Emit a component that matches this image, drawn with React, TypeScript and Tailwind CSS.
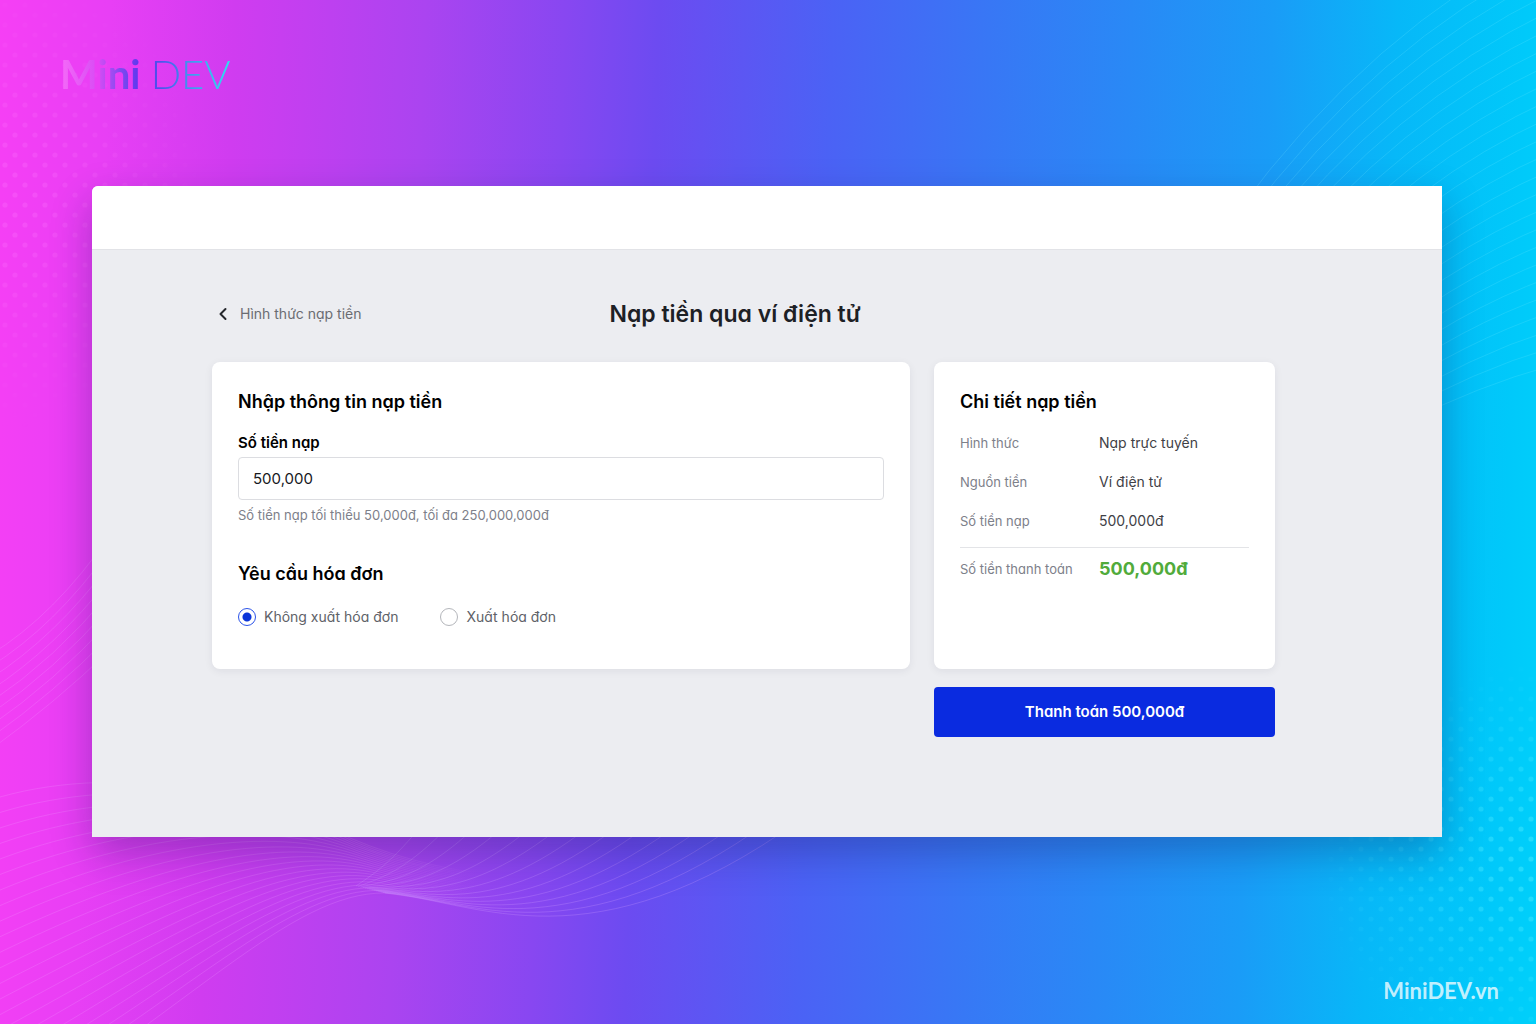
import { useState } from "react";
import type { ReactNode } from "react";

function Dots({ id, className, size, fill, mask }: { id: string; className: string; size: number; fill: string; mask: string }) {
  return (
    <svg aria-hidden="true" className={className} style={{ maskImage: mask }}>
      <defs>
        <pattern id={id} width={size} height={size} patternUnits="userSpaceOnUse">
          <circle cx={size / 4} cy={size / 4} r="2.6" fill={fill} />
          <circle cx={(size * 3) / 4} cy={(size * 3) / 4} r="2.6" fill={fill} />
        </pattern>
      </defs>
      <rect width="100%" height="100%" fill={`url(#${id})`} />
    </svg>
  );
}

function mix(a: number, b: number, t: number) {
  return a + (b - a) * t;
}

function steps(count: number) {
  return Array.from({ length: count }, (_, i) => i / (count - 1));
}

function Waves() {
  const left = steps(22).map(
    (t) => `M-10 ${mix(800, 1130, t)} C${mix(110, 190, t)} ${mix(762, 1010, t)} ${mix(260, 290, t)} ${mix(790, 892, t)} ${mix(350, 385, t)} ${mix(838, 893, t)} Q${mix(430, 440, t)} ${mix(872, 900, t)} ${mix(525, 500, t)} ${mix(878, 914, t)}`,
  );
  const rise = steps(14).map(
    (t) => `M${mix(356, 385, t)} ${mix(886, 893, t)} C${mix(370, 480, t)} ${mix(876, 902, t)} ${mix(390, 590, t)} ${mix(866, 970, t)} ${mix(430, 800, t)} ${mix(815, 820, t)}`,
  );
  const upper = steps(9).map((t) => `M-10 ${mix(655, 750, t)} Q55 ${mix(615, 703, t)} 110 ${mix(535, 650, t)}`);
  const right = steps(25).map(
    (t) => `M${mix(1235, 1400, t)} ${mix(215, 425, t)} Q${mix(1370, 1480, t)} ${mix(30, 385, t)} 1550 ${mix(-60, 366, t)}`,
  );
  return (
    <svg aria-hidden="true" viewBox="0 0 1536 1024" preserveAspectRatio="none" className="absolute inset-0 size-full" fill="none">
      <defs>
        <linearGradient id="left-fade" gradientUnits="userSpaceOnUse" x1="0" y1="0" x2="520" y2="0">
          <stop offset="0" stopColor="#f0a0ff" stopOpacity="0.22" />
          <stop offset="0.7" stopColor="#f0a0ff" stopOpacity="0.2" />
          <stop offset="0.92" stopColor="#f0a0ff" stopOpacity="0" />
        </linearGradient>
      </defs>
      <g stroke="url(#left-fade)">
        {left.map((d) => <path key={d} d={d} />)}
      </g>
      <g stroke="#d0a0ff" strokeOpacity="0.26">
        {rise.map((d) => <path key={d} d={d} />)}
      </g>
      <g stroke="#f0a0ff" strokeOpacity="0.22">
        {upper.map((d) => <path key={d} d={d} />)}
      </g>
      <g stroke="#7ff0ff" strokeOpacity="0.18">
        {right.map((d) => <path key={d} d={d} />)}
      </g>
    </svg>
  );
}

function Card({ title, children }: { title: string; children: ReactNode }) {
  return (
    <section className="rounded-lg bg-white px-[26px] pt-6 pb-10 shadow-[0_2px_8px_rgba(30,30,60,0.07)]">
      <h2 className="text-lg leading-8 font-semibold text-black">{title}</h2>
      {children}
    </section>
  );
}

function Choice({ label, checked, onChange }: { label: string; checked: boolean; onChange: () => void }) {
  return (
    <label className="flex items-center gap-2 text-sm leading-6 text-[#606268]">
      <input
        type="radio"
        name="invoice"
        checked={checked}
        onChange={onChange}
        className="size-[18px] appearance-none rounded-full border border-[#b4b6bb] bg-white checked:border-[#2a52e8] checked:bg-[radial-gradient(circle,#0c35d8_4px,transparent_5px)]"
      />
      {label}
    </label>
  );
}

const details = [
  ["Hình thức", "Nạp trực tuyến"],
  ["Nguồn tiền", "Ví điện tử"],
  ["Số tiền nạp", "500,000đ"],
];

export default function App() {
  const [amount, setAmount] = useState("500,000");
  const [invoice, setInvoice] = useState(false);
  return (
    <div className="relative isolate flex min-h-screen flex-col overflow-hidden bg-[linear-gradient(92deg,#f63ff5_0%,#e83ff5_7%,#d03cf0_15%,#ab44f0_27%,#8847f1_36%,#6c4bf1_42%,#4b62f5_53%,#3877f5_63%,#2989f6_72%,#1a9cf7_81%,#07b8f8_89%,#00c9fa_97%,#00d0fa_100%)] font-['Inter','Noto_Sans',sans-serif] [font-feature-settings:'cv11']">
      <div aria-hidden="true" className="absolute inset-0 -z-10">
        <Dots id="dots-left" className="absolute top-0 left-0 h-[440px] w-[220px]" size={20} fill="rgba(255,130,255,0.24)" mask="radial-gradient(ellipse at 0% 45%, black 10%, transparent 68%)" />
        <Dots id="dots-right" className="absolute right-0 bottom-0 h-[380px] w-[240px]" size={20} fill="rgba(110,250,255,0.32)" mask="radial-gradient(ellipse at 100% 58%, black 10%, transparent 66%)" />
        <Waves />
      </div>

      <header className="px-[60px] pt-[49px]">
        <p className="w-fit bg-[linear-gradient(90deg,#f56af8_0%,#d94cf5_22%,#7d4af0_36%,#5a34ee_48%,#4a58ec_60%,#3f9cf0_78%,#2fe0f0_100%)] bg-clip-text font-['Lato','Noto_Sans',sans-serif] text-[40px] leading-[50px] text-transparent">
          <span className="font-bold">Mini</span> <span className="font-light">DEV</span>
        </p>
      </header>

      <main className="mt-[87px] mr-[94px] ml-[92px] grow rounded-tl-md bg-[#ecedf1] shadow-[0_16px_40px_rgba(20,20,90,0.3)]">
        <div className="h-16 rounded-tl-md border-b border-[#e2e3e7] bg-white" />
        <div className="mr-[167px] ml-[120px]">
          <div className="flex items-center pt-12 pb-8">
            <a href="#methods" className="flex items-center gap-3 pl-1.5 text-sm leading-6 text-[#6a6c72]">
              <svg aria-hidden="true" viewBox="0 0 10 14" className="h-3.5 w-2.5" fill="none" stroke="#25272c" strokeWidth="2" strokeLinecap="round" strokeLinejoin="round">
                <path d="M7.5 2 2.5 7l5 5" />
              </svg>
              Hình thức nạp tiền
            </a>
            <h1 className="ml-[248px] text-[23px] leading-8 font-semibold text-[#1d2025]">Nạp tiền qua ví điện tử</h1>
          </div>

          <div className="grid grid-cols-[minmax(0,698fr)_minmax(0,341fr)] gap-x-6 gap-y-[18px]">
            <Card title="Nhập thông tin nạp tiền">
              <label htmlFor="amount" className="mt-[13px] block text-[15px] leading-6 font-semibold text-black">Số tiền nạp</label>
              <input
                id="amount"
                value={amount}
                onChange={(e) => setAmount(e.target.value)}
                className="mt-0.5 block h-[43px] w-full rounded border border-[#dcdde1] bg-white px-3.5 text-[15px] text-[#17191d]"
              />
              <p className="mt-[5px] text-[13px] leading-5 text-[#7d808a]">Số tiền nạp tối thiểu 50,000đ, tối đa 250,000,000đ</p>
              <fieldset className="mt-[33px]">
                <legend className="text-lg leading-8 font-semibold text-black">Yêu cầu hóa đơn</legend>
                <div className="mt-[15px] flex gap-[42px]">
                  <Choice label="Không xuất hóa đơn" checked={!invoice} onChange={() => setInvoice(false)} />
                  <Choice label="Xuất hóa đơn" checked={invoice} onChange={() => setInvoice(true)} />
                </div>
              </fieldset>
            </Card>

            <Card title="Chi tiết nạp tiền">
              <dl className="mt-[13px] text-sm leading-6 text-[#3f4146]">
                <div className="flex flex-col gap-[15px] border-b border-[#e3e4e7] pb-[14px]">
                  {details.map(([name, value]) => (
                    <div key={name} className="flex">
                      <dt className="w-[139px] text-[13px] text-[#7d808a]">{name}</dt>
                      <dd>{value}</dd>
                    </div>
                  ))}
                </div>
                <div className="flex pt-[9px]">
                  <dt className="w-[139px] text-[13px] text-[#7d808a]">Số tiền thanh toán</dt>
                  <dd className="text-lg leading-6 font-bold text-[#51ab3b]">500,000đ</dd>
                </div>
              </dl>
            </Card>

            <button type="button" className="col-start-2 h-[50px] rounded bg-[#0a2be0] text-[15px] font-semibold text-white">
              Thanh toán 500,000đ
            </button>
          </div>
        </div>
      </main>

      <footer className="mt-[136px] mr-[37px] mb-4 text-right font-['Lato','Noto_Sans',sans-serif] text-[22px] leading-[35px] font-bold text-white/75">
        MiniDEV.vn
      </footer>
    </div>
  );
}
